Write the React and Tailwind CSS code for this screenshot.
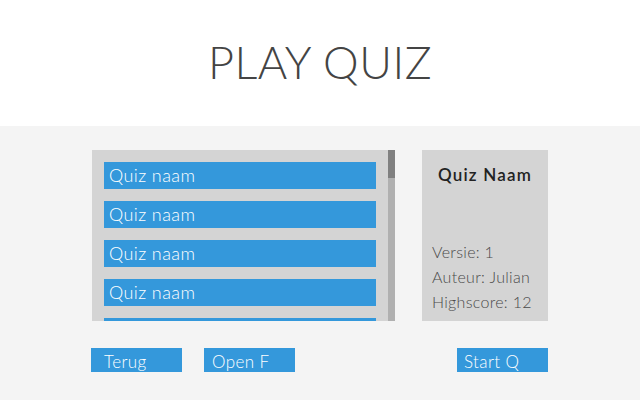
const items = ['Quiz naam', 'Quiz naam', 'Quiz naam', 'Quiz naam', 'Quiz naam'];

const Button = ({ label, indent }) => (
    <div className={`w-[91px] h-[24px] bg-[#3498db] text-white text-[17px] tracking-[0.4px] leading-none font-light pt-[5px] overflow-hidden ${indent}`}>
        {label}
    </div>
);

function App() {
    return (
        <div className="w-[640px] h-[400px] bg-[#f4f4f4] font-['Lato',sans-serif] overflow-hidden">
            <header className="h-[126px] bg-white flex items-center justify-center">
                <h1 className="text-[45px] font-light text-[#444] tracking-[0.5px]">PLAY QUIZ</h1>
            </header>

            <div className="w-[458px] mx-auto pt-[24px] pl-[1px]">
                <div className="flex gap-[27px]">
                    {/* quiz list */}
                    <div className="w-[303px] h-[171px] bg-[#d4d4d4] flex overflow-hidden">
                        <div className="flex-1 px-[12px] pt-[12px] flex flex-col gap-[12px]">
                            {items.map((name, i) => (
                                <div key={i} className="h-[27px] shrink-0 bg-[#3498db] text-white text-[18px] tracking-[0.4px] font-light leading-[27px] pl-[5px]">
                                    {name}
                                </div>
                            ))}
                        </div>
                        <div className="w-[7px] bg-[#b0b0b0]">
                            <div className="h-[28px] bg-[#808080]" />
                        </div>
                    </div>

                    {/* quiz info */}
                    <div className="w-[126px] h-[171px] bg-[#d4d4d4] flex flex-col px-[10px] pt-[12px]">
                        <div className="text-center text-[17px] font-semibold text-[#222] tracking-[1.2px]">Quiz Naam</div>
                        <div className="mt-auto pb-[9px] flex flex-col gap-[4px] text-[16px] font-light text-[#4a4a4a] tracking-[0.3px] leading-[21px] whitespace-nowrap">
                            <span>Versie: 1</span>
                            <span>Auteur: Julian</span>
                            <span>Highscore: 12</span>
                        </div>
                    </div>
                </div>

                <div className="flex w-[457px] mt-[27px] -ml-[1px]">
                    <Button label="Terug" indent="pl-[13px]" />
                    <div className="ml-[22px]">
                        <Button label="Open F" indent="pl-[8px]" />
                    </div>
                    <div className="ml-auto">
                        <Button label="Start Q" indent="pl-[7px]" />
                    </div>
                </div>
            </div>
        </div>
    )
}

export default App
